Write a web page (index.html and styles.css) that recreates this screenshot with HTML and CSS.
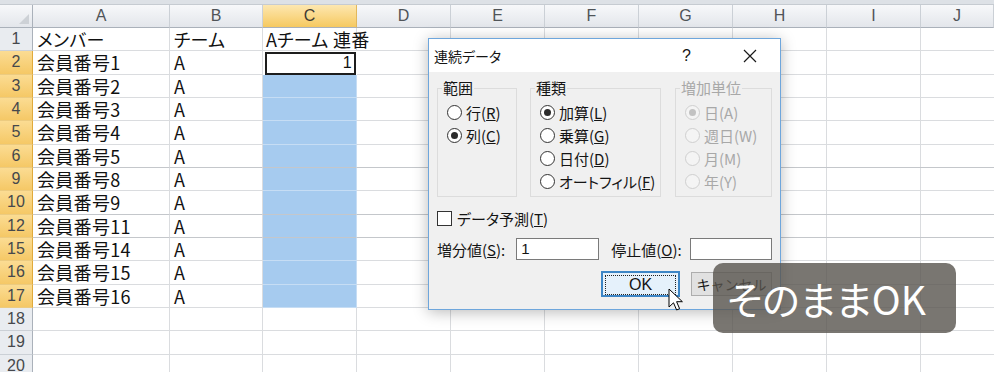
FILE: index.html
```html
<!DOCTYPE html>
<html lang="ja">
<head>
    <meta charset="UTF-8">
    <title>連続データ</title>
    <link rel="stylesheet" href="styles.css">
</head>
<body>
<div class="sheet">
    <div class="topbar"></div>

    <div class="row head">
        <div class="rn corner"></div>
        <div class="col">A</div>
        <div class="col">B</div>
        <div class="col sel">C</div>
        <div class="col">D</div>
        <div class="col">E</div>
        <div class="col">F</div>
        <div class="col">G</div>
        <div class="col">H</div>
        <div class="col">I</div>
        <div class="col">J</div>
    </div>

    <div class="row">
        <div class="rn">1</div>
        <div class="cell">メンバー</div>
        <div class="cell">チーム</div>
        <div class="cell spill">Aチーム 連番</div>
        <div class="rest"></div>
    </div>
    <div class="row">
        <div class="rn on">2</div>
        <div class="cell">会員番号1</div>
        <div class="cell">A</div>
        <div class="cell active"><span>1</span></div>
        <div class="rest"></div>
    </div>
    <div class="row">
        <div class="rn on">3</div>
        <div class="cell">会員番号2</div>
        <div class="cell">A</div>
        <div class="cell fill"></div>
        <div class="rest"></div>
    </div>
    <div class="row">
        <div class="rn on">4</div>
        <div class="cell">会員番号3</div>
        <div class="cell">A</div>
        <div class="cell fill"></div>
        <div class="rest"></div>
    </div>
    <div class="row">
        <div class="rn on">5</div>
        <div class="cell">会員番号4</div>
        <div class="cell">A</div>
        <div class="cell fill"></div>
        <div class="rest"></div>
    </div>
    <div class="row hidden-after">
        <div class="rn on">6</div>
        <div class="cell">会員番号5</div>
        <div class="cell">A</div>
        <div class="cell fill"></div>
        <div class="rest"></div>
    </div>
    <div class="row">
        <div class="rn on">9</div>
        <div class="cell">会員番号8</div>
        <div class="cell">A</div>
        <div class="cell fill"></div>
        <div class="rest"></div>
    </div>
    <div class="row hidden-after">
        <div class="rn on">10</div>
        <div class="cell">会員番号9</div>
        <div class="cell">A</div>
        <div class="cell fill"></div>
        <div class="rest"></div>
    </div>
    <div class="row hidden-after">
        <div class="rn on">12</div>
        <div class="cell">会員番号11</div>
        <div class="cell">A</div>
        <div class="cell fill"></div>
        <div class="rest"></div>
    </div>
    <div class="row">
        <div class="rn on">15</div>
        <div class="cell">会員番号14</div>
        <div class="cell">A</div>
        <div class="cell fill"></div>
        <div class="rest"></div>
    </div>
    <div class="row">
        <div class="rn on">16</div>
        <div class="cell">会員番号15</div>
        <div class="cell">A</div>
        <div class="cell fill"></div>
        <div class="rest"></div>
    </div>
    <div class="row">
        <div class="rn on">17</div>
        <div class="cell">会員番号16</div>
        <div class="cell">A</div>
        <div class="cell fill"></div>
        <div class="rest"></div>
    </div>
    <div class="row">
        <div class="rn">18</div>
        <div class="cell"></div>
        <div class="cell"></div>
        <div class="cell"></div>
        <div class="rest"></div>
    </div>
    <div class="row">
        <div class="rn">19</div>
        <div class="cell"></div>
        <div class="cell"></div>
        <div class="cell"></div>
        <div class="rest"></div>
    </div>
    <div class="row last">
        <div class="rn">20</div>
        <div class="cell"></div>
        <div class="cell"></div>
        <div class="cell"></div>
        <div class="rest"></div>
    </div>

    <!-- 連続データ dialog -->
    <div class="dialog">
        <div class="titlebar">
            <span class="title">連続データ</span>
            <span class="help">?</span>
            <svg class="close" width="14" height="14" viewBox="0 0 14 14">
                <path d="M1 1 L13 13 M13 1 L1 13" stroke="#1a1a1a" stroke-width="1.2"/>
            </svg>
        </div>
        <div class="dlg-body">
            <div class="groups">
                <fieldset class="grp g-range">
                    <legend>範囲</legend>
                    <div class="opt"><span class="radio"></span>行(<u>R</u>)</div>
                    <div class="opt"><span class="radio on"></span>列(<u>C</u>)</div>
                </fieldset>
                <fieldset class="grp g-type">
                    <legend>種類</legend>
                    <div class="opt"><span class="radio on"></span>加算(<u>L</u>)</div>
                    <div class="opt"><span class="radio"></span>乗算(<u>G</u>)</div>
                    <div class="opt"><span class="radio"></span>日付(<u>D</u>)</div>
                    <div class="opt"><span class="radio"></span>オートフィル(<u>F</u>)</div>
                </fieldset>
                <fieldset class="grp g-unit off">
                    <legend>増加単位</legend>
                    <div class="opt"><span class="radio on"></span>日(A)</div>
                    <div class="opt"><span class="radio"></span>週日(W)</div>
                    <div class="opt"><span class="radio"></span>月(M)</div>
                    <div class="opt"><span class="radio"></span>年(Y)</div>
                </fieldset>
            </div>
            <div class="check-row"><span class="box"></span>データ予測(<u>T</u>)</div>
            <div class="value-row">
                <span class="label">増分値(<u>S</u>):</span>
                <span class="field">1</span>
                <span class="label stop-label">停止値(<u>O</u>):</span>
                <span class="field"></span>
            </div>
            <div class="btn-row">
                <button class="btn ok"><span class="focus">OK</span></button>
                <button class="btn cancel">キャンセル</button>
            </div>
        </div>
    </div>

    <div class="caption">そのままOK</div>

    <svg class="cursor" width="16" height="26" viewBox="0 0 16 26">
        <path d="M1 1 L1 19 L5.5 14.8 L8.6 22 L11.6 20.7 L8.6 13.7 L14.4 13.7 Z" fill="#fff" stroke="#000" stroke-width="1" stroke-linejoin="round"/>
    </svg>
</div>
</body>
</html>
```

FILE: styles.css
```css
/* sheet */
body {
    margin: 0;
    background: #FFFFFF;
    font-family: "Noto Sans CJK JP", "Noto Sans", sans-serif;
    overflow: hidden;
}

.sheet {
    position: relative;
    width: 994px;
    height: 372px;
    overflow: hidden;
}

.topbar {
    height: 4px;
    background: #dde1e6;
    border-bottom: 1px solid #c6cbd1;
}

.row {
    display: grid;
    grid-template-columns: 33px 137px 93px 94px 1fr;
    height: 23.33px;
}

.row.head {
    grid-template-columns: 33px 137px 93px 94px 94px 94px 94px 94px 94px 94px 1fr;
    height: 23px;
}

.col {
    box-sizing: border-box;
    background: linear-gradient(#f7f8fa, #e3e6eb);
    border-right: 1px solid #cbd0d6;
    border-bottom: 1px solid #aab1ba;
    color: #505458;
    font-family: "Liberation Sans", sans-serif;
    font-size: 16px;
    line-height: 22px;
    text-align: center;
}

.col.sel {
    background: linear-gradient(#fde7b0, #f6c960);
    border-right-color: #e2b85c;
    color: #3f3b33;
}

.rn {
    box-sizing: border-box;
    background: #e9ecf0;
    border-right: 1px solid #aab1ba;
    border-bottom: 1px solid #cbd0d6;
    color: #45484c;
    font-family: "Liberation Sans", sans-serif;
    font-size: 16px;
    line-height: 22px;
    text-align: center;
}

.rn.on {
    background: linear-gradient(#fbdc93, #f5c866);
    border-right-color: #e0aa3c;
    border-bottom-color: #eccb80;
}

.rn.corner {
    position: relative;
    background: linear-gradient(#f7f8fa, #e3e6eb);
    border-bottom-color: #aab1ba;
}

.rn.corner::after {
    content: "";
    position: absolute;
    right: 3px;
    bottom: 3px;
    border-left: 10px solid transparent;
    border-bottom: 10px solid #cdd1d6;
}

.cell {
    box-sizing: border-box;
    border-right: 1px solid #dadcdf;
    border-bottom: 1px solid #dadcdf;
    padding-left: 4px;
    font-size: 18px;
    line-height: 22px;
    letter-spacing: 0.3px;
    font-feature-settings: "palt";
    color: #111;
    white-space: nowrap;
}

.cell.spill {
    position: relative;
    z-index: 1;
    padding-left: 3px;
}

.cell.fill {
    background: #a6cbef;
    border-bottom-color: #c6ddf4;
    border-right-color: #c6ddf4;
}

.cell.active {
    display: flex;
    justify-content: flex-end;
    align-items: center;
    padding: 0 2px 0 0;
    border: 2px solid #1d1d1d;
    margin: 1px 1px 0 2px;
    font-family: "Liberation Sans", sans-serif;
    font-size: 16px;
    line-height: 16px;
}

.rest {
    border-bottom: 1px solid #dadcdf;
    background: repeating-linear-gradient(to right, transparent 0 93px, #dadcdf 93px 94px);
}

.row.hidden-after .cell,
.row.hidden-after .rest {
    border-bottom-color: #c4c7cb;
}

/* dialog */
.dialog {
    position: absolute;
    left: 428px;
    top: 38px;
    width: 353px;
    height: 272px;
    box-sizing: border-box;
    border: 1px solid #6ea6dc;
    background: #f0f0f0;
    box-shadow: 0 2px 14px rgba(0, 0, 0, 0.28);
    font-size: 15px;
    font-feature-settings: "palt";
    color: #141414;
}

.titlebar {
    display: flex;
    align-items: center;
    height: 33px;
    background: #FFFFFF;
    padding-left: 5px;
}

.title {
    font-size: 14px;
    flex: 1;
}

.help {
    font-family: "Liberation Sans", sans-serif;
    font-size: 16px;
    margin-right: 52px;
}

.close {
    margin-right: 23px;
}

.dlg-body {
    padding: 0 8px;
}

.groups {
    display: flex;
    gap: 13px;
    margin-top: 7px;
}

.grp {
    margin: 0;
    padding: 4px 4px 6px 9px;
    height: 118px;
    box-sizing: border-box;
    border: 1px solid #dcdcdc;
}

.grp legend {
    padding: 0 1px;
    margin-left: -5px;
    line-height: 18px;
    font-size: 15px;
}

.g-range { width: 80px; }
.g-type { width: 131px; }
.g-unit { width: 97px; margin-left: 1px; }

.opt {
    display: flex;
    align-items: center;
    height: 23px;
    white-space: nowrap;
}

.radio {
    box-sizing: border-box;
    flex-shrink: 0;
    width: 15px;
    height: 15px;
    border: 1px solid #333;
    border-radius: 50%;
    background: #FFFFFF;
    margin-right: 4px;
    display: flex;
    align-items: center;
    justify-content: center;
}

.radio.on::after {
    content: "";
    width: 7px;
    height: 7px;
    border-radius: 50%;
    background: #2b2b2b;
}

.off {
    color: #a8a8a8;
}

.off .radio {
    border-color: #cfcfcf;
    background: #f4f4f4;
}

.off .radio.on::after {
    background: #c2c2c2;
}

.check-row {
    display: flex;
    align-items: center;
    height: 22px;
    margin-top: 10px;
}

.box {
    box-sizing: border-box;
    width: 15px;
    height: 15px;
    border: 1px solid #333;
    background: #FFFFFF;
    margin-right: 5px;
}

.value-row {
    display: flex;
    align-items: center;
    margin-top: 9px;
    height: 22px;
}

.label {
    white-space: nowrap;
    flex-shrink: 0;
}

.field {
    box-sizing: border-box;
    flex-shrink: 0;
    width: 83px;
    height: 22px;
    margin-left: 11px;
    border: 1px solid #7a7a7a;
    background: #FFFFFF;
    padding-left: 4px;
    line-height: 20px;
    font-family: "Liberation Sans", sans-serif;
    font-size: 15px;
}

.stop-label {
    margin-left: 12px;
}

.stop-label + .field {
    width: 82px;
    margin-left: 8px;
}

.btn-row {
    display: flex;
    justify-content: flex-end;
    align-items: center;
    gap: 11px;
    margin-top: 11px;
}

.btn {
    box-sizing: border-box;
    height: 24px;
    width: 81px;
    border: 1px solid #adadad;
    background: #e1e1e1;
    font-family: "Noto Sans CJK JP", sans-serif;
    font-size: 14px;
    color: #141414;
    padding: 0;
}

.btn.ok {
    height: 26px;
    width: 79px;
    border: 2px solid #3d86c6;
    background: #e5f1fb;
    padding: 2px;
}

.btn.ok .focus {
    display: block;
    height: 100%;
    border: 1px dotted #222;
    font-family: "Liberation Sans", sans-serif;
    font-size: 16px;
    line-height: 17px;
}

/* overlays */
.caption {
    position: absolute;
    left: 713px;
    top: 263px;
    width: 243px;
    height: 70px;
    box-sizing: border-box;
    padding-left: 14px;
    border-radius: 10px;
    background: rgba(88, 84, 78, 0.8);
    color: #FFFFFF;
    font-size: 39px;
    line-height: 70px;
    font-feature-settings: "palt";
}

.cursor {
    position: absolute;
    left: 668px;
    top: 288px;
}
```
